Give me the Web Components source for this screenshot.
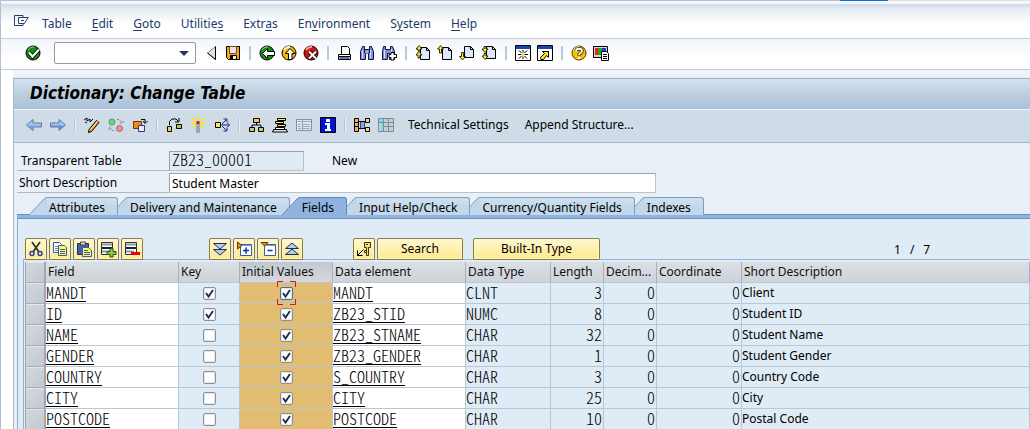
<!DOCTYPE html>
<html lang="en">
<head>
<meta charset="utf-8">
<title>Dictionary: Change Table</title>
<style>
  html, body { margin: 0; height: 100%; }
  body { overflow: hidden; font: 12px/16px "Noto Sans", Tahoma, sans-serif; color: #000; --mono: "Noto Sans CJK KR", monospace; }
</style>
</head>
<body>
<dict-window></dict-window>

<script>
const ICONS = {
  menu: '<path d="M9 3.500V1.500H.5v10H9V9.500" stroke="#24406e" fill="none"/><path d="M4.500 3.500h10M4.500 3.500v6h6l3.500-6M7 6.500h3" stroke="#24406e" fill="none"/>',
  ok: '<circle cx="8" cy="8" r="7" fill="#159015" stroke="#000"/><path d="M3 5a6 6 0 0 1 6-3" stroke="#8fe08f" fill="none"/><path d="M4 7.500l3.500 4L14 4.500" stroke="#000" stroke-width="4" fill="none"/><path d="M4 7.500l3.500 4L14 4.500" stroke="#fff" stroke-width="2.200" fill="none"/>',
  tri: '<path d="M12.500 1.500v13L4.500 8z" fill="#e0e2e4" stroke="#888"/><path d="M12.500 1.500v13L4.500 8" fill="none" stroke="#000"/>',
  save: '<path d="M1.500 1.500h13v13h-11l-2-2z" fill="#f4a51c" stroke="#000"/><path d="M4.500 1.500h7v7h-7z" fill="#f3dcf0" stroke="#7a5010"/><path d="M5.500 10.500h6v4h-6z" fill="#fff4b0" stroke="#000"/><path d="M6 11h2v3H6z" fill="#000"/>',
  back: '<circle cx="8" cy="8" r="7" fill="#159015" stroke="#000"/><path d="M3 5a6 6 0 0 1 6-3" stroke="#8fe08f" fill="none"/><path d="M3.500 8.500L8.500 3.500V6.500h7v4h-7v3z" fill="#fff" stroke="#000"/>',
  exit: '<circle cx="8" cy="8" r="7" fill="#f5b800" stroke="#000"/><path d="M3 5a6 6 0 0 1 6-3" stroke="#fff5b0" stroke-width="2" fill="none"/><path d="M9 3.500l5 5h-3v6H7.500v-6H4.500z" fill="#fff" stroke="#000"/>',
  cancel: '<circle cx="8" cy="8" r="7" fill="#d81010" stroke="#000"/><path d="M3 5a6 6 0 0 1 6-3" stroke="#ff9a8a" stroke-width="2" fill="none"/><path d="M6 6.500l7 7m0-7l-7 7" stroke="#000" stroke-width="3.800"/><path d="M6 6.500l7 7m0-7l-7 7" stroke="#fff" stroke-width="2"/>',
  print: '<path d="M4.500 1.500h6l2 2v6h-8z" fill="#fff" stroke="#000"/><path d="M1.500 9.500h12v2h-12z" fill="#fff" stroke="#000"/><path d="M1.500 11.500h12v3h-12z" fill="#a7b6e8" stroke="#000"/><path d="M3 13h9" stroke="#27368c"/>',
  find: '<path d="M3.500 1.500h2v3h5v-3h2l2 5v8h-5v-6h-3v6h-5v-8z" fill="#7f8fd8" stroke="#10163a"/><path d="M3.500 5v8M11.500 5v8M8 6v3" stroke="#d6dcff"/><path d="M5.500 4v4M10.500 4v4" stroke="#10163a"/>',
  findnext: '<path d="M2.500 1.500h2v3h5v-3h2l2 5v8h-5v-6h-2v6h-5v-8z" fill="#7f8fd8" stroke="#10163a"/><path d="M3.500 5v8M10.500 4v8" stroke="#d6dcff"/><path d="M10 7.500h3v2h2.500v3H13V15h-3v-2.500H8v-3h2z" fill="#fff" stroke="#000"/>',
  first: '<path d="M5.500 2.500h6l3 3v9h-9z" fill="#dfe8fb" stroke="#000"/><path d="M11.500 2.500v3h3" fill="none" stroke="#000"/><path d="M4 .5l3 3.500H5v2H3V4H1zM4 6.500L7 10H5v3H3v-3H1z" fill="#ffee20" stroke="#000" stroke-width=".8"/>',
  prev: '<path d="M5.500 2.500h6l3 3v9h-9z" fill="#dfe8fb" stroke="#000"/><path d="M11.500 2.500v3h3" fill="none" stroke="#000"/><path d="M3.500.5l3 3.500H4.500v4h-2V4H.5z" fill="#ffee20" stroke="#000" stroke-width=".8"/>',
  next: '<path d="M5.500 1.500h6l3 3v8h-9z" fill="#dfe8fb" stroke="#000"/><path d="M11.500 1.500v3h3" fill="none" stroke="#000"/><path d="M3.500 15l3-3.500h-2v-4h-2v4h-2z" fill="#ffee20" stroke="#000" stroke-width=".8"/>',
  last: '<path d="M5.500 1.500h6l3 3v9h-9z" fill="#dfe8fb" stroke="#000"/><path d="M11.500 1.500v3h3" fill="none" stroke="#000"/><path d="M4 7.500L7 4H5V1.500H3V4H1zM4 14.500L7 11H5V8.500H3V11H1z" fill="#ffee20" stroke="#000" stroke-width=".8"/>',
  session: '<path d="M.5.5h15v15H.5z" fill="#fff" stroke="#000"/><path d="M1 1h14v3H1z" fill="#1846b0"/><path d="M8 5v2.500M8 11.500V14M3 9.500h3.500M9.500 9.500H13M4 5.500l2.500 2.500M12 5.500l-2.500 2.500M4 13.500l2.500-2.500M12 13.500l-2.500-2.500" stroke="#000"/><path d="M7 8h2v3H7z" fill="#ffe620"/>',
  shortcut: '<path d="M.5.5h15v15H.5z" fill="#fff" stroke="#000"/><path d="M1 1h14v3H1z" fill="#1846b0"/><path d="M5.500 6.500h6v6l-2-2-3 4H4l-.5-2 4-4z" fill="#ffe620" stroke="#000"/>',
  help: '<circle cx="8" cy="8" r="7" fill="#f5c000" stroke="#553d00"/><path d="M3 6a6 6 0 0 1 5-4" stroke="#fff9c0" stroke-width="2" fill="none"/><path d="M5 6c0-3 6-3 6 0 0 2-3 2-3 4.500" stroke="#402800" stroke-width="3.600" fill="none"/><path d="M5 6c0-3 6-3 6 0 0 2-3 2-3 4M8 12v2" stroke="#fff" stroke-width="1.800" fill="none"/>',
  layout: '<path d="M.5 1.500h14v11H.5z" fill="#d8d8d8" stroke="#000"/><path d="M2 3h4v7H2z" fill="#f02020"/><path d="M5 3h4v7H5z" fill="#18b020"/><path d="M9 3h4v7H9z" fill="#2038e0"/><path d="M8.500 6.500h5l2 2v7h-7z" fill="#fff" stroke="#000"/><path d="M10 9.500h4M10 11.500h4M10 13.500h4" stroke="#000"/>',
  left: '<path d="M.5 8L7 2.500v3.500h8.500v4H7v3.500z" fill="#8fd0fa" stroke="#70747e"/><path d="M2.500 8.500h12.500v1H6.500v3z" fill="#8f8cf6"/>',
  right: '<path d="M15.500 8L9 2.500v3.500H.5v4H9v3.500z" fill="#8fd0fa" stroke="#70747e"/><path d="M13.500 8.500H1v1h8.500v3z" fill="#6f6cf6"/>',
  pencil: '<path d="M5 12.500l7.500-9 2.500 2-7.500 9-3 1z" fill="#f3a22c" stroke="#000"/><path d="M6.500 12.500l7-8.500" stroke="#ffe0b0"/><path d="M0 3l3-2v3l3-2v3l3-3M1 5l2 1" stroke="#000" fill="none"/>',
  toggle: '<circle cx="4" cy="5" r="3" fill="#66d680" stroke="#55a060"/><circle cx="11.500" cy="11.500" r="3" fill="#f09090" stroke="#a06a6a"/><path d="M9 2.500h2l3 3M12 6h3V3M6 13.500H4l-2-3M1 13v-3h3" stroke="#858585" stroke-dasharray="2 1" fill="none"/>',
  copyobj: '<path d="M1.500 4.500h8v7h-8z" fill="#f08a10" stroke="#6a3900"/><path d="M6.500 8.500h6v6h-6z" fill="#e6ecff" stroke="#303878"/><path d="M9 2.500h4v3M11 4l2 2.500L15.500 4" stroke="#000" fill="none"/>',
  where: '<path d="M1.500 9.500h4v5h-4z" fill="#f2cf4d" stroke="#000"/><path d="M10.500 7.500h5v4h-5z" fill="#b9c83e" stroke="#000"/><path d="M3.500 8V4.500L6 2h4l2 2M13 1v4H9" stroke="#000" fill="none"/>',
  match: '<path d="M8 6.500v9" stroke="#667" stroke-width="3"/><path d="M8 7v8" stroke="#dfe6ee"/><path d="M8 0v3M2 1l4 4M14 1l-4 4M1 6h4M11 6h4M3 11l3-3M13 11l-3-3" stroke="#f7e600" stroke-width="1.500"/><path d="M6.500 4h3v3h-3z" fill="#e01010"/>',
  spread: '<path d="M1.500 5.500h5v5h-5z" fill="#ffe94d" stroke="#000"/><path d="M7 8h8M8 7l4-4M8 9l4 4M9.500 2H13v3M9.500 14H13v-3M13 5.500L15.500 8 13 10.500" stroke="#182080" fill="none"/>',
  tree: '<path d="M5.500 1.500h6v4h-6z" fill="#f4c560" stroke="#000"/><path d="M1.500 10.500h5v4h-5zM10.500 10.500h5v4h-5z" fill="#c6d060" stroke="#000"/><path d="M8.500 6v2M4 10V8h9v2" stroke="#000" fill="none"/>',
  stack: '<path d="M5.500 1.500h8v2h-8zM3.500 4.500h8v2h-8zM5.500 7.500h8v2h-8z" fill="#ffe956" stroke="#000"/><path d="M3.500 10.500h9v2h-9z" fill="#fff" stroke="#000"/><path d="M1.500 12.500h13l1 2.500H.5z" fill="#dfe3f0" stroke="#000"/>',
  list: '<path d="M.5 2.500h15v11H.5z" fill="#dfe8ef" stroke="#8a8f94"/><path d="M2 4.500h4M7 4.500h8M2 7.500h3M7 7.500h7M2 9.500h3M7 9.500h7M2 11.500h3M7 11.500h7" stroke="#8ab0dc"/><path d="M6.500 3v10" stroke="#9a9fa4"/>',
  info: '<path d="M.5.5h15v15H.5z" fill="#0010e0" stroke="#000"/><path d="M6 2h4v3H6zM5 6h5v6h1v2H5v-2h2V8H5z" fill="#fff"/>',
  struct: '<path d="M.5 1.500h4v13h-4z" fill="#f4b060" stroke="#000"/><path d="M.5 5.500h4M.5 9.500h4" stroke="#000"/><path d="M6.500 4.500h4v7h-4z" fill="#91a6dc" stroke="#445"/><path d="M5 4.500h6M5 11.500h6" stroke="#000"/><path d="M11.500 1.500h4v4h-4zM11.500 10.500h4v4h-4z" fill="#dfe38a" stroke="#000"/>',
  grid: '<path d="M.5 1.500h15v13H.5z" fill="#c4d0d8" stroke="#85898d"/><path d="M1 2h4v3H1zM3 6h2v8H3z" fill="#70e0f4"/><path d="M5.500 2v12M10.500 2v12M1 5.500h14M5 9.500h10" stroke="#85898d"/>',
  cut: '<path d="M4 1l7 10M12 1L5 11" stroke="#333" stroke-width="1.800"/><circle cx="4" cy="12.500" r="2" fill="none" stroke="#2b3fa8" stroke-width="1.500"/><circle cx="12" cy="12.500" r="2" fill="none" stroke="#2b3fa8" stroke-width="1.500"/>',
  copy: '<path d="M1.500 1.500h6l2 2v8h-8z" fill="#fff" stroke="#3c59b4"/><path d="M3 5.500h4M3 7.500h4M3 9.500h4" stroke="#6a88dc"/><path d="M6.500 4.500h6l2 2v8h-8z" fill="#fff85a" stroke="#3c59b4"/><path d="M8 8.500h5M8 10.500h5M8 12.500h5" stroke="#3c59b4"/>',
  paste: '<path d="M1.500 2.500h11v11h-11z" fill="#3d62b4" stroke="#203060"/><path d="M4.500 1h5v3h-5z" fill="#dcd8c0" stroke="#444"/><path d="M6.500 6.500h6l3 3v6h-9z" fill="#fff85a" stroke="#3c59b4"/><path d="M8 9.500h4M8 11.500h6M8 13.500h6" stroke="#3c59b4"/>',
  rowadd: '<path d="M1.500 1.500h11v12h-11z" fill="#fff" stroke="#333"/><path d="M2 3.500h10M2 10.500h8" stroke="#7d94bd" stroke-width="2"/><path d="M2 7h10" stroke="#222" stroke-width="2"/><path d="M10 7.500h3v3h3v3h-3V16h-3v-2.500H7v-3h3z" fill="#8fca50" stroke="#284c18"/>',
  rowdel: '<path d="M1.500 1.500h11v12h-11z" fill="#fff" stroke="#333"/><path d="M2 3.500h10M2 10.500h8" stroke="#7d94bd" stroke-width="2"/><path d="M2 7h10" stroke="#222" stroke-width="2"/><path d="M7 11h9v3H7z" fill="#f00000"/>',
  down: '<path d="M1.500 2.500h13L8 8z" fill="#b8cdec" stroke="#16305c"/><path d="M1.500 8.500h13L8 14z" fill="#b8cdec" stroke="#16305c"/>',
  up: '<path d="M1.500 7.500h13L8 2z" fill="#b8cdec" stroke="#16305c"/><path d="M1.500 13.500h13L8 8z" fill="#b8cdec" stroke="#16305c"/>',
  expand: '<path d="M4.500 3.500h11v11h-11z" fill="#fff" stroke="#3858a8"/><path d="M5 4.500h10" stroke="#7fa0dc"/><path d="M10 6.500v6M7 9.500h6" stroke="#1b2f90" stroke-width="1.500"/><path d="M1.500 1v7L6 4.500z" fill="#f09010" stroke="#6a3900"/>',
  collapse: '<path d="M4.500 3.500h11v11h-11z" fill="#fff" stroke="#3858a8"/><path d="M5 4.500h10" stroke="#7fa0dc"/><path d="M7.500 9.500h5" stroke="#1b2f90" stroke-width="1.500"/><path d="M1 1.500h7L4.500 5z" fill="#f09010" stroke="#6a3900"/>',
  key: '<path d="M8.500 1.500h6v5h-2v8h-2v-8h-2z" fill="#ffe23c" stroke="#333"/><path d="M8.500 9.500h2v2h-2z" fill="#ffe23c" stroke="#333"/><path d="M10 3h2v1h-2z" fill="#333"/><path d="M7.500 8.500l-6 6M1.500 9.500v5h5" stroke="#000" fill="none"/>'
};

const define = (name, css, html, setup) => {
  const template = document.createElement('template');
  template.innerHTML = `<style>*{box-sizing:border-box}${css}</style>${html}`;
  customElements.define(name, class extends HTMLElement {
    connectedCallback() {
      if (this.shadowRoot) return;
      this.attachShadow({ mode: 'open' }).append(template.content.cloneNode(true));
      if (setup) setup(this, this.shadowRoot);
    }
  });
};
const iconButtons = names => names.split(' ').map(n =>
  n === '|' ? '<i class="sep"></i>' : `<button class="icon" aria-label="${n}"><dict-icon name="${n}"></dict-icon></button>`).join('');
const FLAT = `button{font:inherit;color:inherit;background:none;border:0;padding:0;margin:0;white-space:nowrap}
  .icon{display:block;width:16px;height:16px;flex:none}`;

define('dict-icon', ':host{display:block;width:16px;height:16px}svg{display:block;overflow:visible}', '', (el, root) => {
  root.innerHTML += `<svg width="16" height="16" viewBox="0 0 16 16" aria-hidden="true">${ICONS[el.getAttribute('name')]}</svg>`;
});

define('menu-bar', `${FLAT}
  :host{display:block;border-top:1px solid #b4c0d4;color:#22396a}
  .edge{display:block;height:3px;background:#f4f6f9;position:relative}
  .edge i{position:absolute;top:-1px;right:0;width:190px;height:1px;background:linear-gradient(90deg,#0078d7 48px,#e1e1e1 48px)}
  nav{display:flex;align-items:center;height:34px;padding:6px 13px 0;gap:20px;background:linear-gradient(#ccd9ea,#e6edf1 5px,#fff 20px)}
  .icon{margin:0 -8px 4px 0}
  u{text-underline-offset:2px}`,
  `<span class="edge"><i></i></span><nav><button class="icon" aria-label="Menu"><dict-icon name="menu"></dict-icon></button>
   <button>Table</button><button><u>E</u>dit</button><button><u>G</u>oto</button><button>Utilitie<u>s</u></button><button>Extr<u>a</u>s</button><button>En<u>v</u>ironment</button><button>S<u>y</u>stem</button><button><u>H</u>elp</button></nav>`);

define('system-bar', `${FLAT}
  :host{display:flex;align-items:center;gap:6px;height:32px;padding:0 24px 2px;border-top:1px solid #c5cbd8;border-bottom:1px solid #c5cbd8;background:linear-gradient(#f1f5fa,#fff 20px)}
  .sep{width:6px;height:14px;border-left:2px solid transparent;border-right:2px solid transparent;background:#b4cbe0 padding-box;flex:none}
  .combo{display:flex;align-items:center;width:142px;height:22px;margin:0 1px 0 7px;border:1px solid #949a9c;border-radius:2px;background:#fff}
  input{flex:1;min-width:0;border:0;padding:0 3px;font:inherit;background:none;outline:0}
  .combo button{width:22px;height:20px;display:grid;place-items:center}
  .combo button::after{content:"";border:5px solid transparent;border-top-color:#22396a;border-bottom:0}`,
  `${iconButtons('ok')}<span class="combo"><input aria-label="Command"><button aria-label="History"></button></span>${iconButtons('tri save | back exit cancel | print find findnext | first prev next last | session shortcut | help layout')}`);

define('title-bar', `:host{display:block;border-top:1px solid #9db0cb;border-bottom:1px solid #edf4fa;background:linear-gradient(#d3e2f0,#bccfdd 50%,#a9c1dc)}
  h1{margin:0;padding:0 16px;font:italic bold 17px/28px "DejaVu Sans Condensed","DejaVu Sans",sans-serif;height:30px}`, '<h1><slot></slot></h1>');

define('function-bar', `${FLAT}
  :host{display:flex;align-items:center;gap:8px;height:33px;padding:0 12px 2px;background:#cfdce8;border-bottom:1px solid #9fb3ca}
  .sep{width:2px;height:14px;background:#b0c4da;border-right:1px solid #e8f0f8;flex:none}
  .text{margin-left:6px;padding-right:2px}`,
  `${iconButtons('left right | pencil toggle copyobj | where match spread | tree stack list info | struct grid')}<button class="text">Technical Settings</button><button class="text">Append Structure...</button>`);

define('table-head', `:host{display:block;padding:8px 3px 2px;background:#e8eff6}
  .row{display:flex;align-items:flex-start;height:22px}
  label{width:152px;height:20px;padding:2px 2px 0;border-bottom:1px solid #b2b8be;white-space:nowrap}
  label[for=name]{padding-left:4px}
  input{height:20px;border:1px solid #9ba3aa;border-right-color:#bcc2c8;border-bottom-color:#bcc2c8;padding:0 2px;font:inherit;outline:0;border-radius:0;background:#fff}
  #name{width:135px;padding-bottom:4px;background:#dfebf4;font-family:var(--mono);font-weight:300;font-size:16px;font-feature-settings:"hwid"}
  #text{width:487px}
  span{margin-left:28px;padding-top:2px}`,
  `<div class="row"><label for="name">Transparent Table</label><input id="name" value="ZB23_00001" readonly><span>New</span></div>
   <div class="row"><label for="text">Short Description</label><input id="text" value="Student Master"></div>`);

define('tab-item', `:host{display:block;margin-left:-8px;position:relative;flex:none;--fill:#c3d7ea;--line:#7c9cc2}
  :host([selected]){z-index:9;--fill:#8fb3de;--line:#5f88ba}
  button{display:flex;height:18px;padding:0;border:0;background:none;font:inherit;color:#000;white-space:nowrap}
  svg{display:block;flex:none}
  span{display:block;height:18px;line-height:19px;padding:0 12px 0 2px;border-top:1px solid var(--line);border-right:1px solid var(--line);border-top-right-radius:3px;background:linear-gradient(#d0e0ef,var(--fill) 9px)}
  :host([selected]) span{background:var(--fill)}`,
  `<button role="tab"><svg width="18" height="18"><path d="M0 18L15 2q1-1.500 3-1.500V18z" fill="var(--fill)"/><path d="M0 18L15 2q1-1.500 3-1.500" fill="none" stroke="var(--line)"/></svg><span><slot></slot></span></button>`);

define('tab-strip', `:host{display:flex;padding-left:23px;background:#e8eff6}`, '<slot></slot>',
  el => [...el.children].forEach((tab, i) => { if (!tab.hasAttribute('selected')) tab.style.zIndex = 8 - i; }));

define('row-tools', `
  :host{display:flex;height:41px;padding:20px 2px 0;gap:2px}
  button{height:22px;min-width:22px;padding:2px;border:1px solid #8a7a3c;border-top-color:#847f70;border-radius:2px;background:linear-gradient(#fff8d0,#fde88f);font:inherit;color:#000;box-shadow:inset 0 0 0 1px #fff6c0}
  button[data-start]{margin-left:64px}
  button[data-key]{margin-left:48px}
  .search{width:86px}
  .type{width:127px;margin-left:8px}
  output{display:flex;gap:9px;margin-left:292px;padding-top:4px}`,
  `<button aria-label="Cut"><dict-icon name="cut"></dict-icon></button><button aria-label="Copy"><dict-icon name="copy"></dict-icon></button><button aria-label="Paste"><dict-icon name="paste"></dict-icon></button><button aria-label="Insert row"><dict-icon name="rowadd"></dict-icon></button><button aria-label="Delete row"><dict-icon name="rowdel"></dict-icon></button>
   <button data-start aria-label="Expand all"><dict-icon name="down"></dict-icon></button><button aria-label="Expand"><dict-icon name="expand"></dict-icon></button><button aria-label="Collapse"><dict-icon name="collapse"></dict-icon></button><button aria-label="Collapse all"><dict-icon name="up"></dict-icon></button>
   <button data-key aria-label="Foreign keys"><dict-icon name="key"></dict-icon></button><button class="search">Search</button><button class="type">Built-In Type</button>
   <output><span>1</span><span>/</span><span>7</span></output>`);

define('check-box', `:host{display:inline-grid;position:relative;vertical-align:middle}
  input{appearance:none;margin:0;width:13px;height:13px;border:1px solid #8b9096;border-radius:2px;background:#fff;box-shadow:inset 0 0 0 1px #e6e8ea}
  input:checked{background:#fff url("data:image/svg+xml,%3Csvg xmlns='http://www.w3.org/2000/svg' viewBox='0 0 11 11'%3E%3Cpath d='M2 5l2.500 3.500L9 2' fill='none' stroke='%23272b48' stroke-width='1.900'/%3E%3C/svg%3E")}
  svg{display:none;position:absolute;left:-3px;top:-6px}
  :host([current]) svg{display:block}
  :host([current]) input{border-color:#3a70b0}`,
  `<input type="checkbox"><svg width="19" height="24"><path d="M6 .5H.5V6M13 .5h5.500V6M.5 18v5.500H6M18.500 18v5.500H13" fill="none" stroke="#d01818"/></svg>`,
  (el, root) => {
    const box = root.querySelector('input');
    box.checked = el.hasAttribute('checked');
    box.setAttribute('aria-label', el.getAttribute('label'));
  });

define('fields-table', `
  :host{display:block;border-top:1px solid #93b2d2;border-left:1px solid #93b2d2;padding:2px 0 0 1px}
  table{border-collapse:separate;border-spacing:0;table-layout:fixed;width:100%}
  th,td{height:21px;padding:0;border-right:1px solid #b9c6d6;border-bottom:1px solid #b9c6d6;text-align:left;white-space:nowrap;overflow:visible}
  thead th{font-weight:normal;padding:0 2px;background:linear-gradient(#dbe0e5,#ced3d9);border-right-color:#a8b0ba;color:#111}
  thead th.current{background:linear-gradient(#c2c8cf,#d4d8dd)}
  .pick{background:linear-gradient(135deg,#d4d8de,#c3c8cf);border-right:2px solid #9ca8ba;border-bottom-color:#a3adbb;border-left:1px solid #9ca8ba;box-shadow:inset 0 1px #e4e7ea}
  .edit{background:#fff}.init{background:#e2bc70}.center{text-align:center;line-height:0}
  .mono{font-family:var(--mono);font-weight:300;font-size:16px;line-height:16px;padding-bottom:3px;font-feature-settings:"hwid"}
  .num{text-align:right;padding-right:1px}
  a{color:#000;text-underline-offset:2px;text-decoration-thickness:1px}`,
  `<table><colgroup><col style="width:21px"><col style="width:133px"><col style="width:61px"><col style="width:93px"><col style="width:133px"><col style="width:85px"><col style="width:53px"><col style="width:53px"><col style="width:85px"><col></colgroup>
  <thead><tr><th class="pick"></th><th>Field</th><th>Key</th><th class="current">Initial Values</th><th>Data element</th><th>Data Type</th><th>Length</th><th>Decim...</th><th>Coordinate</th><th>Short Description</th></tr></thead><tbody></tbody></table>`,
  (el, root) => {
    const rows = [
      ['MANDT', 1, 'MANDT', 'CLNT', 3, 'Client'], ['ID', 1, 'ZB23_STID', 'NUMC', 8, 'Student ID'],
      ['NAME', 0, 'ZB23_STNAME', 'CHAR', 32, 'Student Name'], ['GENDER', 0, 'ZB23_GENDER', 'CHAR', 1, 'Student Gender'],
      ['COUNTRY', 0, 'S_COUNTRY', 'CHAR', 3, 'Country Code'], ['CITY', 0, 'CITY', 'CHAR', 25, 'City'],
      ['POSTCODE', 0, 'POSTCODE', 'CHAR', 10, 'Postal Code']];
    root.querySelector('tbody').innerHTML = rows.map(([f, key, elem, type, len, text], i) =>
      `<tr><td class="pick"></td><td class="edit mono"><a href="#">${f}</a></td>
      <td class="center"><check-box label="${f} key" ${key ? 'checked' : ''}></check-box></td>
      <td class="center init"><check-box label="${f} initial" checked ${i ? '' : 'current'}></check-box></td>
      <td class="edit mono"><a href="#">${elem}</a></td><td class="mono">${type}</td><td class="mono num">${len}</td><td class="mono num">0</td><td class="mono num">0</td><td>${text}</td></tr>`).join('');
  });

define('dict-window', `
  :host{display:flex;flex-direction:column;min-height:100%;border-left:1px solid #b4bfd0;background:#fff}
  main{flex:1;display:flex;flex-direction:column;margin-left:12px;padding-top:8px;background:linear-gradient(#f3f5f9,#e9eef5 8px)}
  .work{flex:1;display:flex;flex-direction:column;border-left:1px solid #a9b9cc;background:#e8eff6}
  .page{flex:1;margin-left:3px;border-top:3px solid #90b4dd;border-left:1px solid #8fb0d0;background:#dfebf5;box-shadow:0 -1px #6a90bc,inset 0 1px #6a90bc;padding-left:5px}`,
  `<menu-bar></menu-bar><system-bar></system-bar><main><div class="work"><title-bar>Dictionary: Change Table</title-bar><function-bar></function-bar><table-head></table-head>
   <tab-strip role="tablist"><tab-item>Attributes</tab-item><tab-item>Delivery and Maintenance</tab-item><tab-item selected>Fields</tab-item><tab-item>Input Help/Check</tab-item><tab-item>Currency/Quantity Fields</tab-item><tab-item>Indexes</tab-item></tab-strip>
   <div class="page"><row-tools></row-tools><fields-table></fields-table></div></div></main>`);
</script>
</body>
</html>
